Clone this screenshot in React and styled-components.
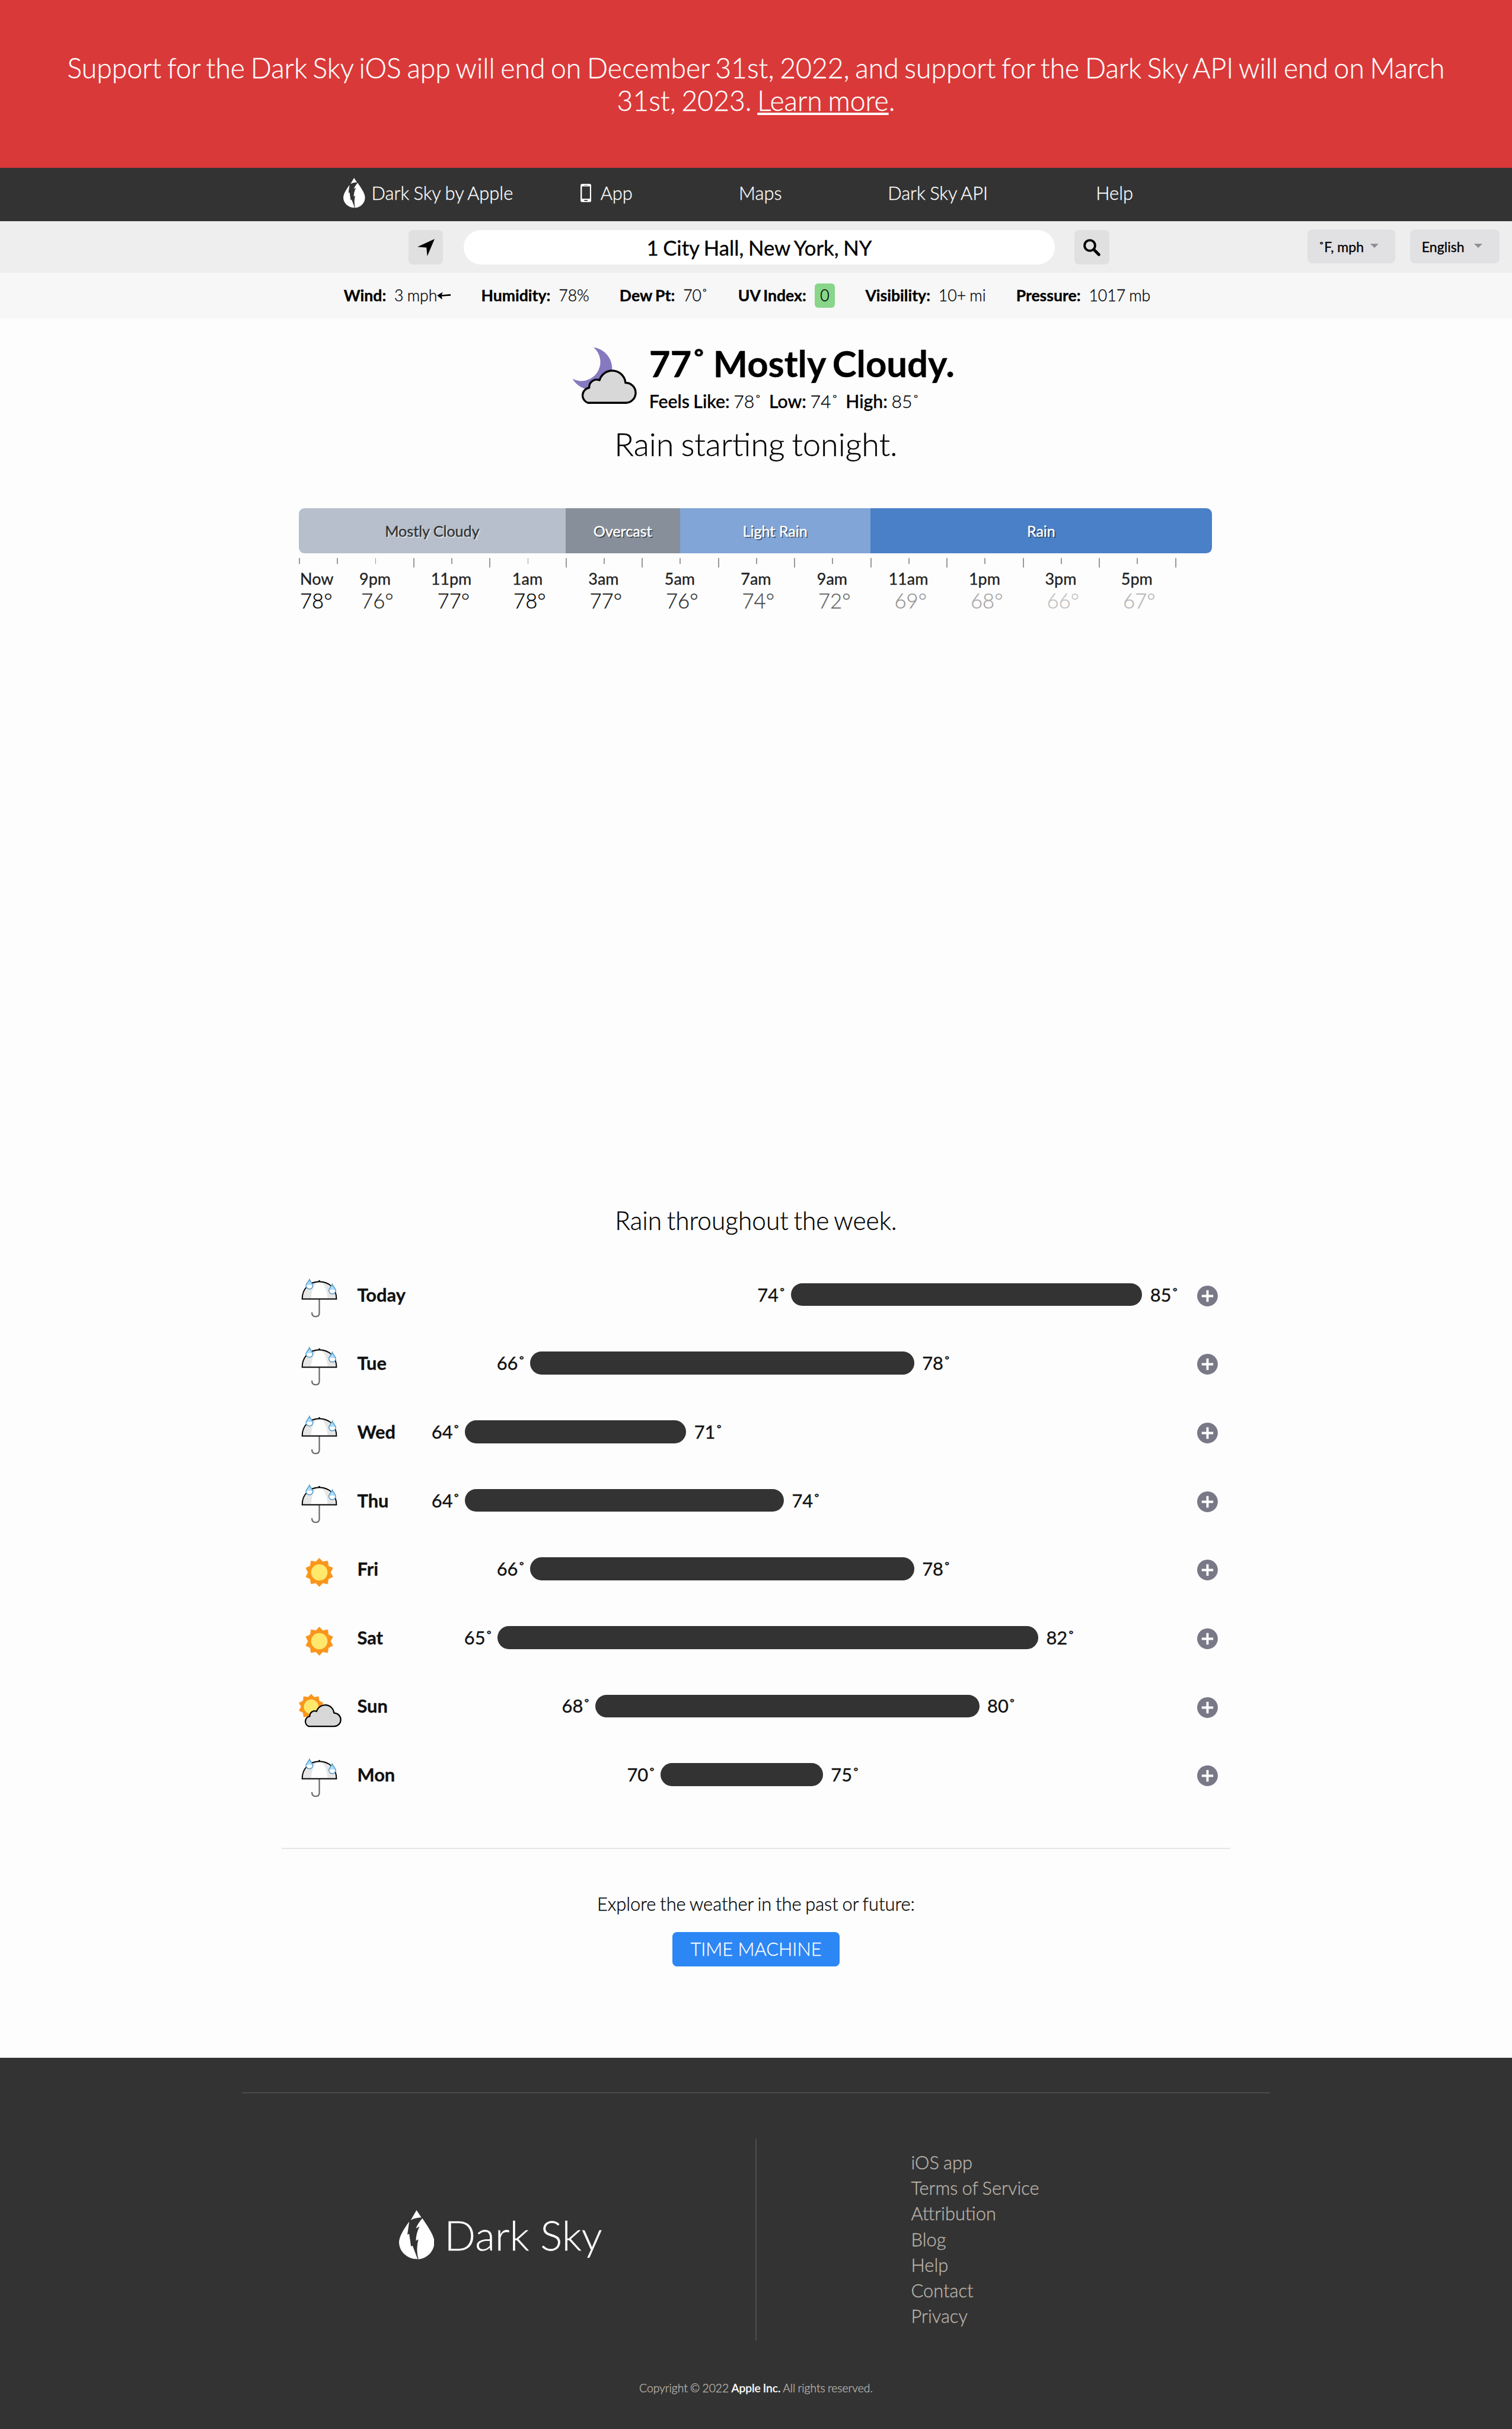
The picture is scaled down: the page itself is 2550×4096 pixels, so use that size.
import React from "react";
import styled, { createGlobalStyle, css } from "styled-components";

/* 1rem = ten layout units of the 1323-unit wide page */
const GlobalStyle = createGlobalStyle`
  html { font-size: calc(100vw / 132.3); }
  body { margin: 0; background: #fdfdfd; }
  *, *::before, *::after { box-sizing: border-box; }
  #root {
    font-family: Lato, "Open Sans", sans-serif;
    color: #000;
    font-weight: 400;
    -webkit-text-stroke: 0.35px;
  }
  a { color: inherit; text-decoration: none; }
  svg { display: block; }
`;

const Page = styled.div`
  display: flex;
  flex-direction: column;
  min-height: 100vh;
  overflow: hidden;
`;

const Banner = styled.div`
  height: 14.7rem;
  padding: 4.5rem 5rem 0;
  background: #da3939;
  color: #fff;
  font-size: 2.4rem;
  line-height: 2.88rem;
  font-weight: 300;
  word-spacing: -0.062em;
  text-align: center;

  a { text-decoration: underline; }
`;

const Nav = styled.nav`
  display: flex;
  align-items: center;
  height: 4.66rem;
  padding: 0 0 0.26rem 30.04rem;
  background: #333;
  color: #fff;
  font-size: 1.6rem;
  font-weight: 300;
  word-spacing: -0.03em;
  white-space: nowrap;
`;

const NavItem = styled.a`
  display: flex;
  align-items: center;
  margin-left: ${(p) => p.$space || 0}rem;
  gap: ${(p) => p.$gap || 0}rem;
`;

const SearchBar = styled.div`
  display: flex;
  align-items: flex-start;
  height: 4.5rem;
  padding: 0.78rem 1.1rem 0 35.74rem;
  background: #eee;
`;

const SquareButton = styled.button`
  display: flex;
  align-items: center;
  justify-content: center;
  width: 3.03rem;
  height: 3rem;
  padding: 0;
  border: 0;
  border-radius: 0.4rem;
  background: #e0e0e0;
`;

const SearchField = styled.div`
  width: 51.7rem;
  height: 3rem;
  margin: 0 1.75rem 0 1.81rem;
  border-radius: 1.5rem;
  background: #fff;
  font-size: 1.8rem;
  line-height: 3.08rem;
  word-spacing: -0.035em;
  text-align: center;
`;

const Selects = styled.div`
  display: flex;
  gap: 1.3rem;
  margin: -0.08rem 0 0 auto;
`;

const Select = styled.div`
  display: flex;
  align-items: center;
  width: ${(p) => p.$width}rem;
  height: 3rem;
  padding: 0 1.5rem 0 1rem;
  border-radius: 0.4rem;
  background: #e1e1e4;
  font-size: 1.2rem;
  justify-content: space-between;
  white-space: nowrap;

  &::after {
    content: "";
    margin-top: -0.1rem;
    border: 0.4rem solid transparent;
    border-top-color: #8e8e93;
    border-bottom: 0;
  }
`;

const Stats = styled.div`
  display: flex;
  align-items: center;
  gap: 2.65rem;
  height: 3.99rem;
  padding: 0 0 0 30.08rem;
  background: #f7f7f7;
  font-size: 1.38rem;
  word-spacing: -0.04em;
  white-space: nowrap;
`;

const Stat = styled.div`
  display: flex;
  align-items: center;
  gap: 0.72rem;
`;

const Label = styled.span`
  font-weight: ${(p) => (p.$bold ? 700 : 500)};
`;

const Light = styled.span`
  display: ${(p) => (p.$flex ? "flex" : "inline")};
  align-items: center;
  font-weight: 300;
`;

const UvBadge = styled.span`
  width: 1.8rem;
  height: 2.1rem;
  border-radius: 0.3rem;
  background: #89d589;
  font-weight: 300;
  line-height: 2.1rem;
  text-align: center;
`;

const Current = styled.section`
  display: flex;
  height: 8.25rem;
  padding: 2.14rem 0 0 49.82rem;

  svg { margin-top: 0.11rem; }
`;

const CurrentText = styled.div`
  margin-left: 0.98rem;
  white-space: nowrap;
`;

const Temperature = styled.div`
  font-size: 3.2rem;
  font-weight: 700;
  line-height: 3.6rem;
  word-spacing: -0.05em;
`;

const FeelsLike = styled.div`
  display: flex;
  gap: 0.65rem;
  margin-top: 0.5rem;
  font-size: 1.57rem;
  line-height: 2rem;
  word-spacing: -0.04em;
`;

const Summary = styled.div`
  font-size: 2.8rem;
  font-weight: 300;
  line-height: 3.4rem;
  margin-top: 1.05rem;
  word-spacing: -0.05em;
  text-align: center;
`;

const WeekSummary = styled(Summary)`
  margin-top: 51.6rem;
  font-size: 2.2rem;
  line-height: 3rem;
  word-spacing: -0.065em;
`;

const Timeline = styled.section`
  width: 80rem;
  margin: 3.9rem 0 0 26.15rem;
`;

const Bar = styled.div`
  display: flex;
  width: 79.9rem;
  height: 3.98rem;
  border-radius: 0.5rem;
  overflow: hidden;
`;

const Segment = styled.div`
  flex: ${(p) => p.$hours} 0 0;
  background: ${(p) => p.$color};
  font-size: 1.3rem;
  line-height: 4rem;
  text-align: center;
  ${(p) =>
    p.$dark
      ? css`
          color: #333;
          text-shadow: 0.1rem 0.1rem 0 rgba(255, 255, 255, 0.5);
        `
      : css`
          color: #fff;
          text-shadow: 0.1rem 0.1rem 0 rgba(0, 0, 0, 0.5);
        `}
`;

const Ticks = styled.div`
  display: grid;
  grid-template-columns: repeat(24, 1fr);
  height: 0.8rem;
  margin-top: 0.42rem;
`;

const Tick = styled.i`
  width: 0.1rem;
  height: ${(p) => (p.$tall ? 0.8 : 0.5)}rem;
  background: #999;
`;

const HourRow = styled.div`
  display: grid;
  grid-template-columns: 3.333rem repeat(11, 6.6667rem);
  text-align: center;
`;

const HourNames = styled(HourRow)`
  margin-top: 0.09rem;
  color: #222;
  font-size: 1.4rem;
  line-height: 1.8rem;

  span:first-child { padding-right: 0.2rem; }
`;

const HourTemps = styled(HourRow)`
  margin-top: -0.05rem;
  font-size: 1.8rem;
  font-weight: 300;
  line-height: 2.2rem;
`;

const HourTemp = styled.span`
  color: ${(p) => p.$color};
  padding-left: 0.4rem;

  &:first-child { padding: 0 0.3rem 0 0; }
`;

const Week = styled.section`
  width: 80.61rem;
  margin: 1.98rem 0 0 25.95rem;
`;

const Day = styled.div`
  display: flex;
  align-items: center;
  height: 6rem;
  font-size: 1.6rem;
  color: #111;

  > svg:first-child { margin-top: 0.64rem; }
  > svg:last-child { margin: 0.22rem 0 0 auto; }
`;

const DayName = styled.div`
  width: 5rem;
  margin-left: 1.31rem;
  font-weight: 700;
`;

const Low = styled.div`
  width: 3.3rem;
  margin-left: ${(p) => 0.7 + p.$offset * 2.85}rem;
  text-align: right;
  white-space: nowrap;
`;

const Range = styled.div`
  width: ${(p) => p.$degrees * 2.85 - 0.6}rem;
  height: 2rem;
  margin: 0 0.7rem 0 0.43rem;
  border-radius: 1rem;
  background: #333;
`;

const Divider = styled.hr`
  width: ${(p) => p.$width}rem;
  height: 0.11rem;
  margin: ${(p) => p.$top}rem auto 0;
  border: 0;
  background: ${(p) => p.$color};
`;

const Explore = styled.section`
  display: flex;
  flex-direction: column;
  align-items: center;
  height: 18.24rem;
  padding-top: 3.84rem;
  font-size: 1.6rem;
  font-weight: 300;
  line-height: 2rem;
  word-spacing: -0.055em;
`;

const TimeMachine = styled.a`
  width: 14.6rem;
  height: 3rem;
  margin-top: 1.4rem;
  border-radius: 0.4rem;
  background: #2c87f5;
  color: #fff;
  line-height: 3.06rem;
  word-spacing: 0;
  text-align: center;
`;

const Footer = styled.footer`
  flex: 1;
  padding-top: 3rem;
  background: #333;
  color: #bbb5ad;
  font-weight: 300;
`;

const FooterColumns = styled.div`
  display: grid;
  grid-template-columns: 1fr 0.1rem 1fr;
  width: 90rem;
  height: 17.7rem;
  margin: 3.96rem auto 0;
`;

const Brand = styled.div`
  display: flex;
  align-items: center;
  padding: 0 0 0.85rem 13.75rem;
  gap: 0.9rem;
  color: #fff;
  font-size: 3.6rem;
`;

const Rule = styled.div`
  background: #4d4d4d;
`;

const Links = styled.div`
  display: flex;
  flex-direction: column;
  padding: 0.98rem 0 0 13.52rem;
  font-size: 1.6rem;
  line-height: 2.24rem;
  word-spacing: -0.04em;
`;

const Copyright = styled.div`
  margin-top: 3.44rem;
  font-size: 1rem;
  line-height: 1.4rem;
  word-spacing: -0.05em;
  text-align: center;

  b { color: #fff; font-weight: 400; }
`;

const size = (w, h) => ({ style: { width: `${w}rem`, height: `${h}rem` } });

const DropLogo = ({ w, h }) => (
  <svg viewBox="0 0 30.9 42.9" preserveAspectRatio="none" {...size(w, h)} fill="#fff">
    <path d="M15.3 0 L19.5 6.3 Q13.6 6.5 10.2 8.8 Q12.6 4.6 15.3 0Z" />
    <path d="M8.9 10 Q0 22 0 28 C0 36 7 42.9 16.3 42.8 L11.8 31 L10.5 31.8 L8.9 20.8 L7.3 21.4Z" />
    <path d="M20.4 7.1 C26 15.5 30.9 22.5 30.9 28 C30.9 36 24.5 42.4 16.9 42.9 Q14.6 34 16.9 25.5 L14.7 26.7 Q15 20 17.9 14.3 L14.7 15.9 Q16.8 11 20.4 7.1Z" />
  </svg>
);

const PhoneIcon = () => (
  <svg viewBox="0 0 19 32" {...size(0.95, 1.6)}>
    <rect width="19" height="32" rx="3.5" fill="#fff" />
    <rect x="2.5" y="4.5" width="14" height="21.5" fill="#333" />
    <rect x="6" y="1.8" width="7" height="1.2" fill="#999" />
    <rect x="6.5" y="28" width="6" height="2" rx="0.8" fill="#555" />
  </svg>
);

const LocationIcon = () => (
  <svg viewBox="0 0 15 15" {...size(1.5, 1.5)}>
    <path d="M15 0 L8.6 15 L7.9 7.5 L0 6.9Z" />
  </svg>
);

const SearchIcon = () => (
  <svg viewBox="0 0 15 15" {...size(1.5, 1.5)} fill="none" stroke="#000">
    <circle cx="5.7" cy="5.7" r="4.6" strokeWidth="2" />
    <path d="M9.3 9.3 L13.6 13.6" strokeWidth="2.6" strokeLinecap="round" />
  </svg>
);

const WindArrow = () => (
  <svg viewBox="0 0 12 7" {...size(1.2, 0.7)}>
    <path d="M0 3.3 L5 0.2 L4.1 2.7 L12 2.1 V3.5 L4.1 4 L4.6 6.8Z" />
  </svg>
);

const cloud = "M122 959 A27.5 27.5 0 0 1 127 906 A26 26 0 0 1 163 880 A46.5 46.5 0 0 1 254 889 A35 35 0 0 1 255 959 Z";

const Cloud = () => (
  <path d={cloud} transform="translate(-57 -753)" fill="#d8d8d8" stroke="#000" strokeWidth="7" strokeLinejoin="round" />
);

const star = Array.from({ length: 20 }, (_, i) => {
  const r = i % 2 ? 59 : 75;
  const a = (i * Math.PI) / 10;
  return `${(r * Math.sin(a)).toFixed(2)},${(-r * Math.cos(a)).toFixed(2)}`;
}).join(" ");

const SunShape = ({ transform }) => (
  <g transform={transform}>
    <polygon points={star} fill="#f9951c" stroke="#f9951c" strokeWidth="1.5" strokeLinejoin="round" />
    <circle r="43" fill="#ffe86c" />
  </g>
);

const MoonCloudIcon = () => (
  <svg viewBox="0 0 240 240" {...size(6, 6)}>
    <path d="M85 12 A74 74 0 1 1 11.6 122 A66.5 66.5 0 0 0 85 12Z" fill="#8679bf" />
    <Cloud />
  </svg>
);

const Drop = ({ x, y }) => (
  <g transform={`translate(${x} ${y})`}>
    <path d="M0 4 C4 16 18 27 18 37 A18 18 0 0 1 -18 37 C-18 27 -4 16 0 4Z" fill="#fff" />
    <path d="M0 4 C4 16 15 26 17 35 Q0 31 -17 35 C-15 26 -4 16 0 4Z" fill="#a9dbff" />
    <path d="M0 4 C4 16 18 27 18 37 A18 18 0 0 1 -18 37 C-18 27 -4 16 0 4Z" fill="none" stroke="#5097c7" strokeWidth="4.5" />
  </g>
);

const icons = {
  rain: () => (
    <g transform="translate(-57 -1113)" fill="none">
      <path d="M177 1238 V1311 Q177 1328.5 157 1328.5 Q138 1328.5 138 1306" stroke="#6b6b6b" strokeWidth="7" />
      <path d="M87 1236 C87 1180 127 1145 177 1145 C227 1145 267 1180 267 1236Z" fill="#e6e6e6" />
      <path d="M134 1232 C136 1190 152 1148 177 1148 C202 1148 218 1190 220 1232Z" fill="#fff" />
      <path d="M87 1236 C87 1180 127 1145 177 1145 C227 1145 267 1180 267 1236Z" stroke="#000" strokeWidth="6" />
      <circle cx="177" cy="1141.5" r="4.5" fill="#000" />
      <Drop x={125} y={1129} />
      <Drop x={245} y={1154} />
    </g>
  ),
  sun: () => <SunShape transform="translate(120 120)" />,
  partly: () => (
    <>
      <SunShape transform="translate(77 103) scale(0.89)" />
      <Cloud />
    </>
  ),
};

const DayIcon = ({ type }) => {
  const Shape = icons[type];
  return (
    <svg viewBox="0 0 240 240" {...size(4, 4)}>
      <Shape />
    </svg>
  );
};

const PlusIcon = () => (
  <svg viewBox="0 0 18 18" {...size(1.81, 1.81)}>
    <circle cx="9" cy="9" r="9" fill="#787887" />
    <path d="M4 9 H14 M9 4 V14" stroke="#fff" strokeWidth="2" />
  </svg>
);

const segments = [
  ["Mostly Cloudy", 7, "#b6bfcb", true],
  ["Overcast", 3, "#878f9a"],
  ["Light Rain", 5, "#80a5d6"],
  ["Rain", 8.97, "#4a80c7"],
];

const hours = [
  ["Now", 78, "#000"],
  ["9pm", 76, "#2a2a2a"],
  ["11pm", 77, "#111"],
  ["1am", 78, "#000"],
  ["3am", 77, "#111"],
  ["5am", 76, "#2a2a2a"],
  ["7am", 74, "#484848"],
  ["9am", 72, "#666"],
  ["11am", 69, "#949494"],
  ["1pm", 68, "#a6a6a6"],
  ["3pm", 66, "#c0c0c0"],
  ["5pm", 67, "#b3b3b3"],
];

/* lows and highs keep their decimals for the bars; the labels are rounded */
const days = [
  ["rain", "Today", 74, 85],
  ["rain", "Tue", 66, 78],
  ["rain", "Wed", 64, 71],
  ["rain", "Thu", 64, 74],
  ["sun", "Fri", 66, 78],
  ["sun", "Sat", 65, 81.81],
  ["partly", "Sun", 68, 80],
  ["rain", "Mon", 70, 75.2],
];

const links = ["iOS app", "Terms of Service", "Attribution", "Blog", "Help", "Contact", "Privacy"];

export default function App() {
  return (
    <Page>
      <GlobalStyle />
      <Banner>
        Support for the Dark Sky iOS app will end on December 31st, 2022, and support for the Dark Sky API will end on
        March 31st, 2023. <a href="#more">Learn more</a>.
      </Banner>

      <Nav>
        <NavItem href="#" $gap={0.57}>
          <DropLogo w={1.9} h={2.62} />
          Dark Sky by Apple
        </NavItem>
        <NavItem href="#" $space={5.9} $gap={0.8}>
          <PhoneIcon />
          App
        </NavItem>
        <NavItem href="#" $space={9.3}>Maps</NavItem>
        <NavItem href="#" $space={9.27}>Dark Sky API</NavItem>
        <NavItem href="#" $space={9.45}>Help</NavItem>
      </Nav>

      <SearchBar>
        <SquareButton><LocationIcon /></SquareButton>
        <SearchField>1 City Hall, New York, NY</SearchField>
        <SquareButton><SearchIcon /></SquareButton>
        <Selects>
          <Select $width={7.72}>˚F, mph</Select>
          <Select $width={7.8}>English</Select>
        </Selects>
      </SearchBar>

      <Stats>
        <Stat><Label $bold>Wind:</Label><Light $flex>3 mph<WindArrow /></Light></Stat>
        <Stat><Label $bold>Humidity:</Label><Light>78%</Light></Stat>
        <Stat><Label $bold>Dew Pt:</Label><Light>70˚</Light></Stat>
        <Stat><Label $bold>UV Index:</Label><UvBadge>0</UvBadge></Stat>
        <Stat><Label $bold>Visibility:</Label><Light>10+ mi</Light></Stat>
        <Stat><Label $bold>Pressure:</Label><Light>1017 mb</Light></Stat>
      </Stats>

      <Current>
        <MoonCloudIcon />
        <CurrentText>
          <Temperature>77˚ Mostly Cloudy.</Temperature>
          <FeelsLike>
            <span><Label>Feels Like:</Label> <Light>78˚</Light></span>
            <span><Label>Low:</Label> <Light>74˚</Light></span>
            <span><Label>High:</Label> <Light>85˚</Light></span>
          </FeelsLike>
        </CurrentText>
      </Current>
      <Summary>Rain starting tonight.</Summary>

      <Timeline>
        <Bar>
          {segments.map(([name, span, color, dark]) => (
            <Segment key={name} $hours={span} $color={color} $dark={dark}>{name}</Segment>
          ))}
        </Bar>
        <Ticks>
          {Array.from({ length: 24 }, (_, i) => <Tick key={i} $tall={i > 1 && i % 2 === 1} />)}
        </Ticks>
        <HourNames>
          {hours.map(([name]) => <span key={name}>{name}</span>)}
        </HourNames>
        <HourTemps>
          {hours.map(([name, temp, color]) => <HourTemp key={name} $color={color}>{temp}°</HourTemp>)}
        </HourTemps>
      </Timeline>

      <WeekSummary>Rain throughout the week.</WeekSummary>
      <Week>
        {days.map(([icon, name, low, high]) => (
          <Day key={name}>
            <DayIcon type={icon} />
            <DayName>{name}</DayName>
            <Low $offset={low - 64}>{Math.round(low)}˚</Low>
            <Range $degrees={high - low} />
            <span>{Math.round(high)}˚</span>
            <PlusIcon />
          </Day>
        ))}
      </Week>

      <Divider $width={83} $top={3.42} $color="#e5e5e5" />
      <Explore>
        Explore the weather in the past or future:
        <TimeMachine href="#">TIME MACHINE</TimeMachine>
      </Explore>

      <Footer>
        <Divider $width={90} $top={0} $color="#4b4b4b" />
        <FooterColumns>
          <Brand><DropLogo w={3.09} h={4.29} />Dark Sky</Brand>
          <Rule />
          <Links>{links.map((l) => <a key={l} href="#">{l}</a>)}</Links>
        </FooterColumns>
        <Copyright>Copyright © 2022 <b>Apple Inc.</b> All rights reserved.</Copyright>
      </Footer>
    </Page>
  );
}
